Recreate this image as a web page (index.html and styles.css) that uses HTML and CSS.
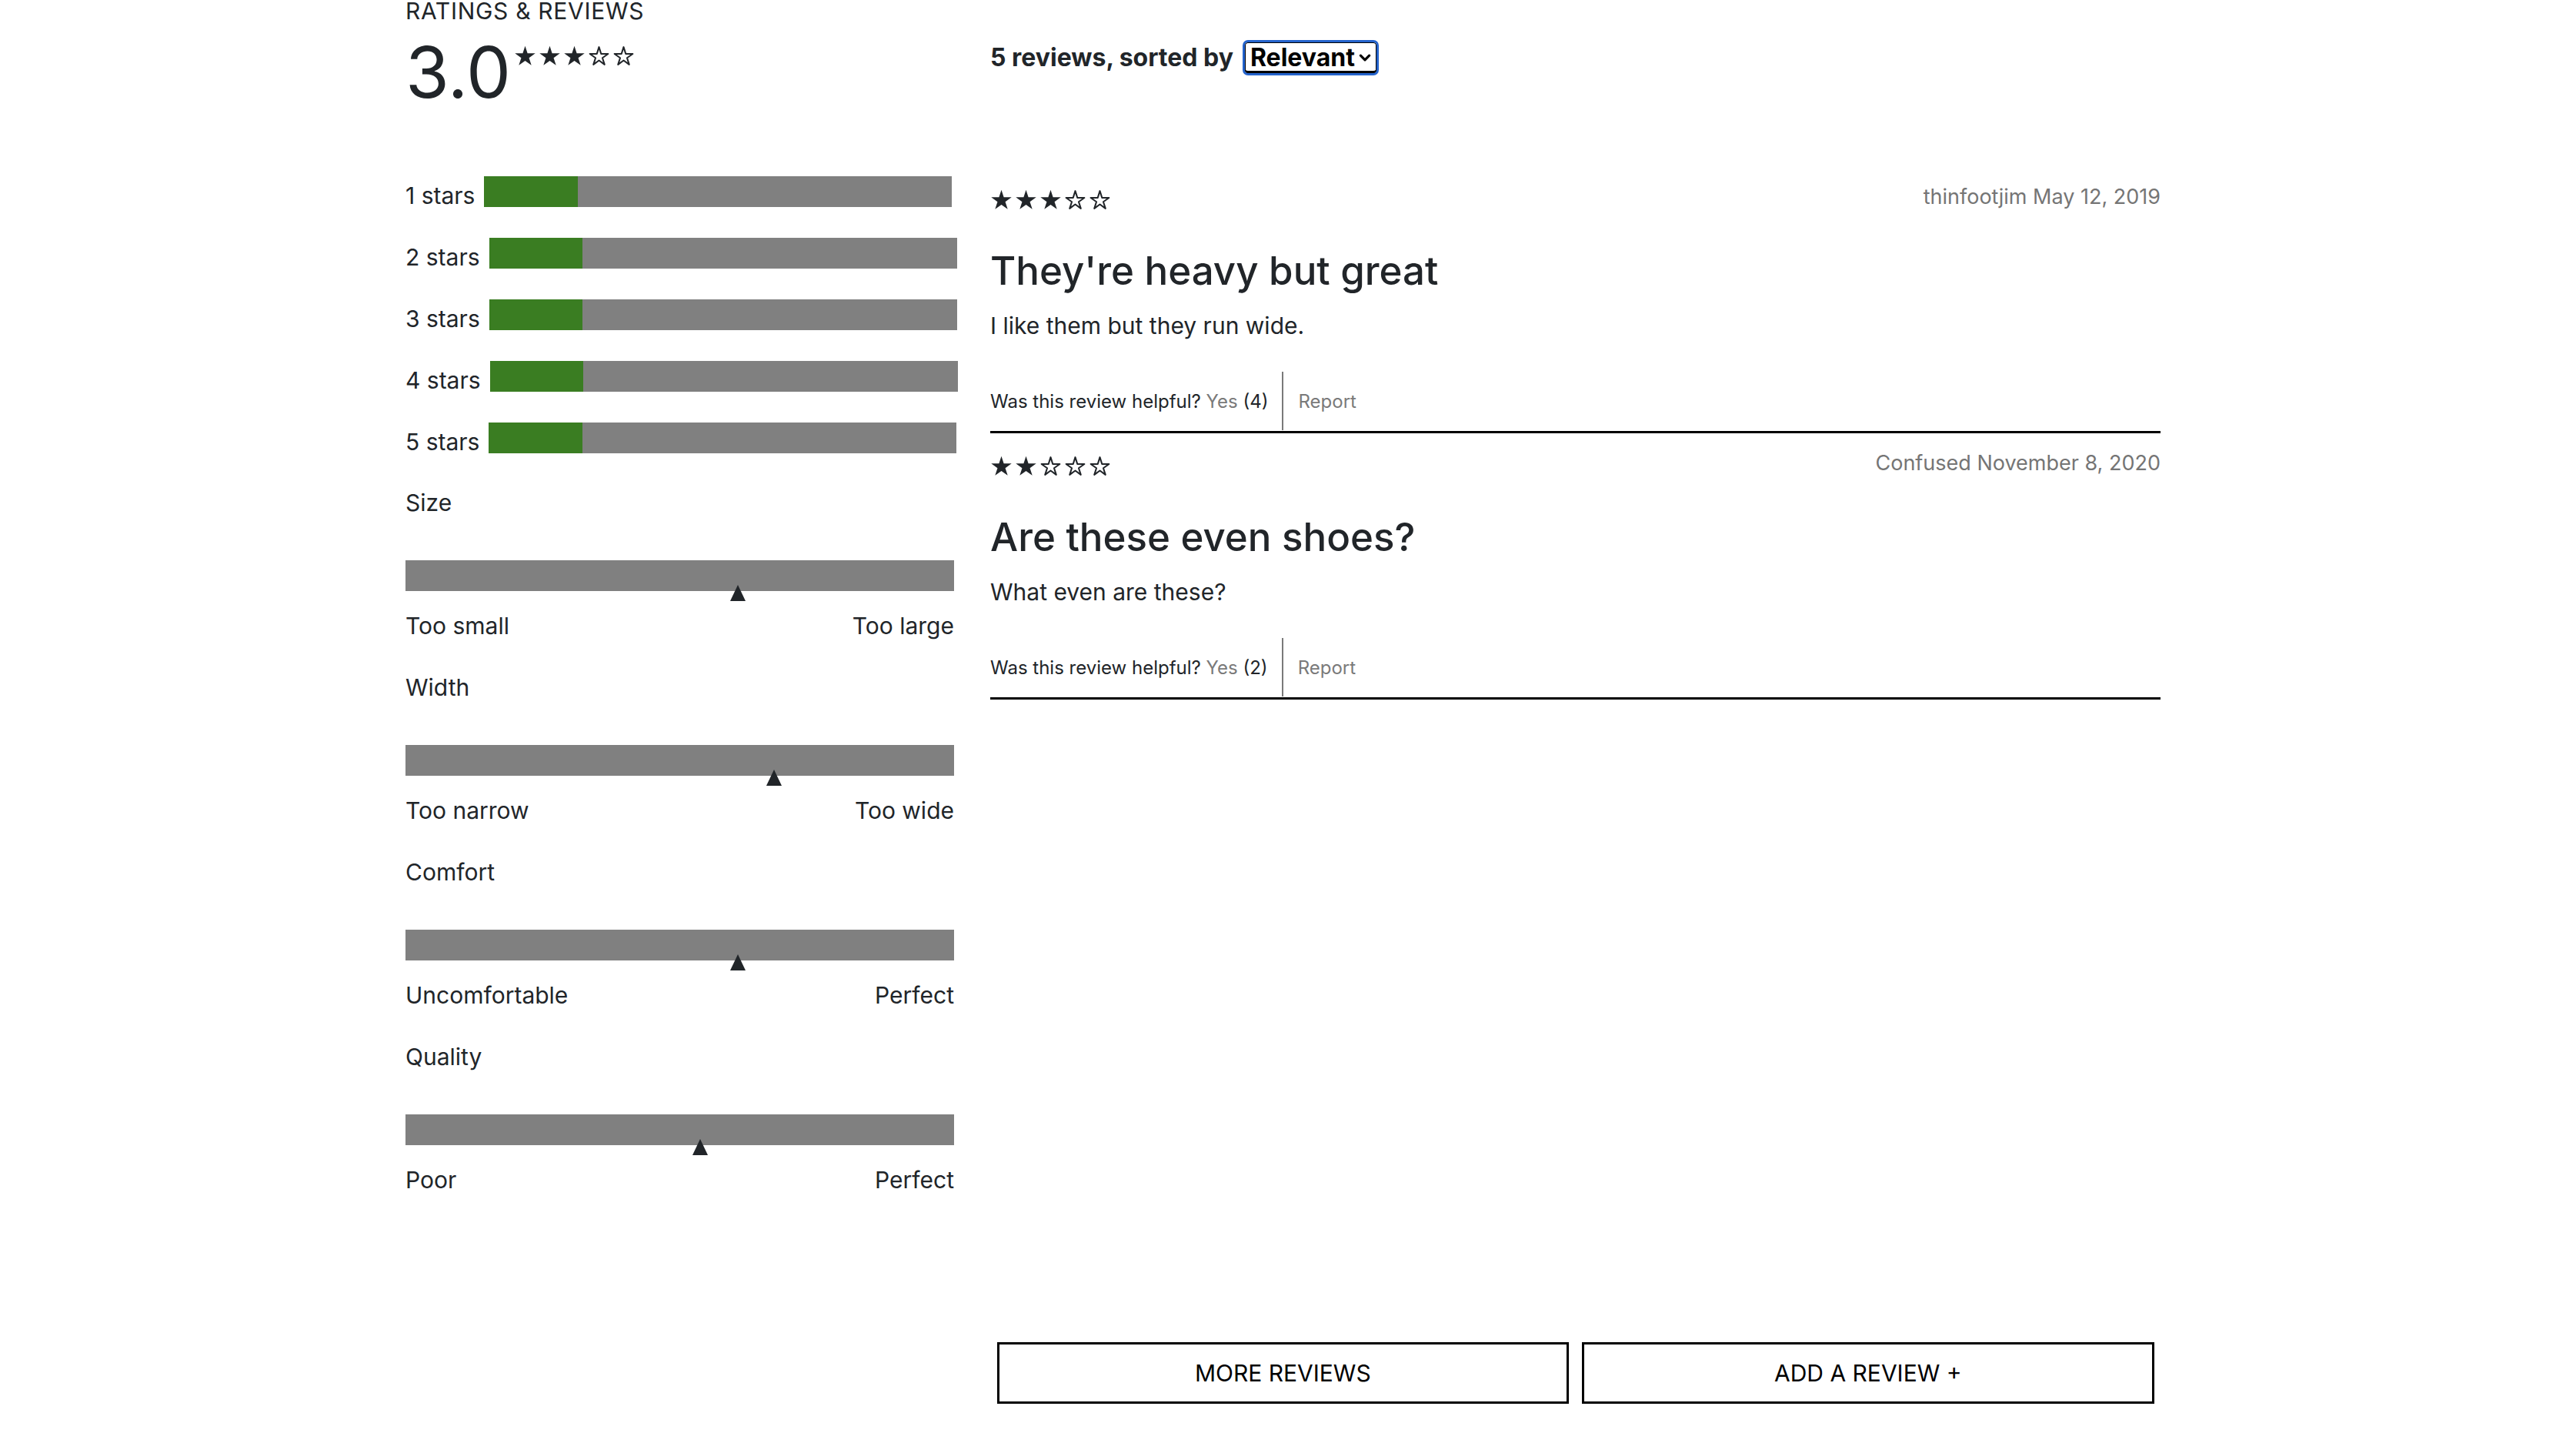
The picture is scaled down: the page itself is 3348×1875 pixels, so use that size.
FILE: index.html
```html
<!DOCTYPE html>
<html lang="en">
<head>
<meta charset="utf-8">
<title>Ratings &amp; Reviews</title>
<link rel="stylesheet" href="styles.css">
</head>
<body>
<svg class="defs" width="0" height="0" aria-hidden="true">
  <defs>
    <symbol id="star-full" viewBox="0 0 24 24">
      <polygon points="12,1.4 14.58,9.35 22.94,9.35 16.18,14.26 18.76,22.2 12,17.29 5.24,22.2 7.82,14.26 1.06,9.35 9.42,9.35" fill="#212529"/>
    </symbol>
    <symbol id="star-empty" viewBox="0 0 24 24">
      <polygon points="12,2.6 14.3,9.9 21.8,9.9 15.7,14.3 18.0,21.4 12,17.0 6.0,21.4 8.3,14.3 2.2,9.9 9.7,9.9" fill="none" stroke="#212529" stroke-width="1.7" stroke-linejoin="round"/>
    </symbol>
  </defs>
</svg>
<main class="ratings-reviews">
  <section class="summary">
    <h2 class="summary-title">RATINGS &amp; REVIEWS</h2>
    <div class="avg-row">
      <span class="avg">3.0</span>
      <span class="stars stars-top">
        <svg><use href="#star-full"/></svg><svg><use href="#star-full"/></svg><svg><use href="#star-full"/></svg><svg><use href="#star-empty"/></svg><svg><use href="#star-empty"/></svg>
      </span>
    </div>
    <div class="breakdown">
      <div class="star-row"><span class="star-label">1 stars</span><div class="bar"><div class="bar-fill" style="width:20%"></div></div></div>
      <div class="star-row"><span class="star-label">2 stars</span><div class="bar"><div class="bar-fill" style="width:20%"></div></div></div>
      <div class="star-row"><span class="star-label">3 stars</span><div class="bar"><div class="bar-fill" style="width:20%"></div></div></div>
      <div class="star-row"><span class="star-label">4 stars</span><div class="bar"><div class="bar-fill" style="width:20%"></div></div></div>
      <div class="star-row"><span class="star-label">5 stars</span><div class="bar"><div class="bar-fill" style="width:20%"></div></div></div>
    </div>
    <div class="chars">
      <div class="char">
        <div class="char-name">Size</div>
        <div class="char-track"><div class="char-bar"></div><span class="marker" style="left:60.6%"></span></div>
        <div class="char-ends"><span>Too small</span><span>Too large</span></div>
      </div>
      <div class="char">
        <div class="char-name">Width</div>
        <div class="char-track"><div class="char-bar"></div><span class="marker" style="left:67.2%"></span></div>
        <div class="char-ends"><span>Too narrow</span><span>Too wide</span></div>
      </div>
      <div class="char">
        <div class="char-name">Comfort</div>
        <div class="char-track"><div class="char-bar"></div><span class="marker" style="left:60.6%"></span></div>
        <div class="char-ends"><span>Uncomfortable</span><span>Perfect</span></div>
      </div>
      <div class="char">
        <div class="char-name">Quality</div>
        <div class="char-track"><div class="char-bar"></div><span class="marker" style="left:53.7%"></span></div>
        <div class="char-ends"><span>Poor</span><span>Perfect</span></div>
      </div>
    </div>
  </section>

  <section class="reviews">
    <div class="reviews-header">
      <span>5 reviews, sorted by</span>
      <span class="sort-select">Relevant
        <svg class="chevron" viewBox="0 0 16 16"><polyline points="3,5.5 8,10.5 13,5.5" fill="none" stroke="#000" stroke-width="2.8" stroke-linecap="round" stroke-linejoin="round"/></svg>
      </span>
    </div>
    <div class="review-list">
      <article class="review">
        <div class="review-top">
          <span class="stars">
            <svg><use href="#star-full"/></svg><svg><use href="#star-full"/></svg><svg><use href="#star-full"/></svg><svg><use href="#star-empty"/></svg><svg><use href="#star-empty"/></svg>
          </span>
          <span class="review-meta">thinfootjim May 12, 2019</span>
        </div>
        <h3 class="review-title">They're heavy but great</h3>
        <p class="review-body">I like them but they run wide.</p>
        <div class="review-actions">
          <span class="helpful">Was this review helpful?&nbsp;<span class="muted">Yes</span>&nbsp;(4)</span>
          <span class="report">Report</span>
        </div>
      </article>
      <article class="review">
        <div class="review-top">
          <span class="stars">
            <svg><use href="#star-full"/></svg><svg><use href="#star-full"/></svg><svg><use href="#star-empty"/></svg><svg><use href="#star-empty"/></svg><svg><use href="#star-empty"/></svg>
          </span>
          <span class="review-meta">Confused November 8, 2020</span>
        </div>
        <h3 class="review-title">Are these even shoes?</h3>
        <p class="review-body">What even are these?</p>
        <div class="review-actions">
          <span class="helpful">Was this review helpful?&nbsp;<span class="muted">Yes</span>&nbsp;(2)</span>
          <span class="report">Report</span>
        </div>
      </article>
    </div>
    <div class="review-buttons">
      <button class="btn">MORE REVIEWS</button>
      <button class="btn">ADD A REVIEW +</button>
    </div>
  </section>
</main>
</body>
</html>
```

FILE: styles.css
```css
body {
  margin: 0;
  font-family: "Inter", "Noto Sans", sans-serif;
  color: #212529;
  background: #fff;
}

.defs {
  position: absolute;
  width: 0;
  height: 0;
  overflow: hidden;
}

.ratings-reviews {
  display: grid;
  grid-template-columns: 713px 1521px;
  column-gap: 47px;
  margin-left: 527px;
}

/* ---------- left summary ---------- */
.summary-title {
  margin: 0;
  font-size: 30px;
  font-weight: 400;
  line-height: 28px;
  letter-spacing: 0.7px;
  white-space: nowrap;
}

.avg-row {
  display: flex;
  align-items: flex-start;
  margin-top: 20px;
}

.avg {
  font-size: 92px;
  line-height: 92px;
  font-weight: 400;
}

.stars {
  display: inline-flex;
  gap: 3px;
}

.stars svg {
  width: 29px;
  height: 29px;
  display: block;
}

.stars-top {
  margin-top: 10px;
  margin-left: 4px;
}

.breakdown {
  margin-top: 89px;
  display: flex;
  flex-direction: column;
  gap: 40px;
}

.star-row {
  display: flex;
  align-items: center;
  height: 40px;
}

.star-label {
  flex-shrink: 0;
  white-space: nowrap;
  font-size: 30px;
  line-height: 30px;
  margin-top: 10px;
  margin-right: 12px;
}

.bar {
  flex-shrink: 0;
  width: 608px;
  height: 40px;
  background: #808080;
}

.bar-fill {
  height: 100%;
  background: #3a7d22;
}

.chars {
  margin-top: 46px;
}

.char {
  margin-bottom: 44px;
}

.char-name {
  font-size: 30px;
  line-height: 36px;
}

.char-track {
  position: relative;
  margin-top: 57px;
  height: 40px;
}

.char-bar {
  height: 40px;
  background: #808080;
}

.marker {
  position: absolute;
  top: 32px;
  width: 0;
  height: 0;
  border-left: 10px solid transparent;
  border-right: 10px solid transparent;
  border-bottom: 21px solid #212529;
  transform: translateX(-50%);
}

.char-ends {
  display: flex;
  justify-content: space-between;
  margin-top: 27px;
  font-size: 30px;
  line-height: 36px;
}

/* ---------- right reviews ---------- */
.reviews-header {
  display: flex;
  align-items: center;
  gap: 12px;
  margin-top: 52px;
  height: 45px;
  font-size: 32px;
  font-weight: 700;
}

.sort-select {
  display: inline-flex;
  align-items: center;
  justify-content: space-between;
  box-sizing: border-box;
  width: 177px;
  height: 46px;
  padding: 0 6px 0 7px;
  border: 3px solid #2463cc;
  border-radius: 7px;
  box-shadow: inset 0 0 0 1px #000, inset 0 -3px 0 #000;
  color: #000;
  font-size: 32px;
  font-weight: 700;
}

.chevron {
  width: 18px;
  height: 18px;
}

.review-list {
  margin-top: 144px;
  height: 1503px;
}

.review {
  border-bottom: 3px solid #000;
}

.review + .review {
  padding-top: 24px;
}

.review-top {
  display: flex;
  justify-content: space-between;
  align-items: flex-start;
}

.review-top .stars {
  margin-top: 4px;
}

.review-meta {
  font-size: 27px;
  line-height: 30px;
  color: #757575;
}

.review-title {
  margin: 47px 0 0;
  font-size: 51px;
  line-height: 62px;
  font-weight: 500;
}

.review-body {
  margin: 22px 0 0;
  font-size: 30px;
  line-height: 36px;
}

.review-actions {
  display: flex;
  align-items: stretch;
  height: 76px;
  margin-top: 42px;
  margin-bottom: 1px;
  font-size: 24px;
}

.helpful {
  display: flex;
  align-items: center;
  padding-right: 18px;
  border-right: 2px solid #7a7a7a;
}

.muted {
  color: #7a7a7a;
}

.report {
  display: flex;
  align-items: center;
  padding-left: 19px;
  color: #7a7a7a;
}

.review-buttons {
  display: flex;
}

.btn {
  flex: 1;
  margin: 0 8.5px;
  height: 80px;
  border: 3px solid #000;
  background: #fff;
  color: #000;
  font-family: "Inter", "Noto Sans", sans-serif;
  font-size: 30px;
  font-weight: 400;
  cursor: pointer;
}
```
